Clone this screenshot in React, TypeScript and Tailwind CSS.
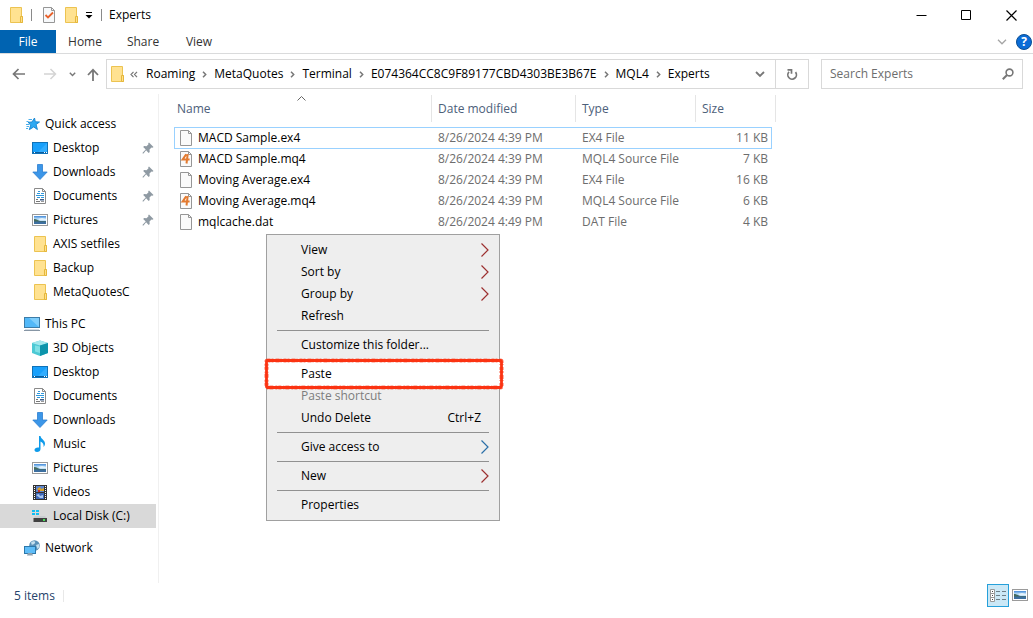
import type { ReactNode } from 'react';

type IconProps = { className?: string };

function FolderIcon({ className = '' }: IconProps) {
  return (
    <svg width="16" height="16" viewBox="0 0 16 16" className={`shrink-0 ${className}`} aria-hidden="true">
      <path d="M2.500.5h11v9h1v6h-12z" fill="#ffe08a" stroke="#ecc351" />
      <path d="M3 1h10v8.500h-1.500V15H3z" fill="#ffe291" />
      <path d="M12.500 9.500h2v6h-2z" fill="#ffe08a" stroke="#e5b73c" />
    </svg>
  );
}

function StarIcon() {
  return (
    <svg width="16" height="16" viewBox="0 0 16 16" className="shrink-0" aria-hidden="true">
      <path d="M10.500 2l.8 3.800 4.200.2-3.400 2.500 1.300 5-3.700-2.600-4.400 2.800 1.500-4.700L4 6.300l4-.3z" fill="#2fa9f2" stroke="#1583cf" strokeWidth=".9" />
      <path d="M4.500 3.500h3.500M2.500 5.500h2M2 8.500h3.500M2.500 10.500h2.500M2 12.500h2" stroke="#4aaeea" />
    </svg>
  );
}

function DesktopIcon() {
  return (
    <svg width="16" height="16" viewBox="0 0 16 16" className="shrink-0" aria-hidden="true">
      <rect x=".5" y="2.500" width="15" height="11" fill="#18a0fb" stroke="#0f72b8" />
      <path d="M15 3v9H6z" fill="#3db2ff" opacity=".7" />
      <path d="M1 12.500h14" stroke="#0b5c9c" />
      <path d="M2 12.500h1M12 12.500h1M14 12.500h1" stroke="#fff" />
    </svg>
  );
}

function DownloadIcon() {
  return (
    <svg width="16" height="16" viewBox="0 0 16 16" className="shrink-0" aria-hidden="true">
      <path d="M5.500.5h5v7.500h4.700L8 15.500.8 8h4.700z" fill="#3c96e8" stroke="#2c7fd0" strokeWidth=".8" />
    </svg>
  );
}

function DocumentIcon() {
  return (
    <svg width="16" height="16" viewBox="0 0 16 16" className="shrink-0" aria-hidden="true">
      <path d="M2.500.5h8l3 3v12h-11z" fill="#fff" stroke="#8a8a8a" />
      <path d="M10.500.5v3h3" fill="none" stroke="#8a8a8a" />
      <path d="M6 3.500h2M5 5.500h3M9 5.500h3M4 7.500h8M5 9.500h3M9 9.500h3" stroke="#2e97dc" />
      <path d="M4 11.500h2M4 13.500h4" stroke="#777" />
      <path d="M8 11h4v1.500H8z" fill="#3f5c86" />
      <path d="M9 13.500h3" stroke="#999" />
    </svg>
  );
}

function PictureIcon() {
  return (
    <svg width="16" height="16" viewBox="0 0 16 16" className="shrink-0" aria-hidden="true">
      <rect x=".5" y="2.500" width="15" height="11" fill="#fff" stroke="#9a9a9a" />
      <rect x="2" y="4" width="12" height="8" fill="#a9d3f5" />
      <path d="M2 4h12v1.500H2z" fill="#5797dd" />
      <path d="M2 7c3 0 4 2 7 2h5v1H2z" fill="#456b5b" />
      <path d="M2 9.500h12V12H2z" fill="#3d6f9f" />
      <path d="M6 7l4-1 4 1v1.500H8z" fill="#e6f3fb" />
    </svg>
  );
}

function ComputerIcon() {
  return (
    <svg width="16" height="16" viewBox="0 0 16 16" className="shrink-0" aria-hidden="true">
      <rect x=".5" y="1.500" width="15" height="10" fill="#52b8f8" stroke="#3c7ca8" />
      <path d="M15 2v9L5 2z" fill="#8bd3fd" opacity=".8" />
      <path d="M0 14.500h16" stroke="#8796a5" />
      <path d="M1 13.500h14" stroke="#d5dde4" />
    </svg>
  );
}

function CubeIcon() {
  return (
    <svg width="16" height="16" viewBox="0 0 16 16" className="shrink-0" aria-hidden="true">
      <path d="M0 3l8-2.500L16 3v10l-8 3-8-3z" fill="#4cc9d4" />
      <path d="M0 3l8-2.500L16 3 8 5.500z" fill="#a5e8ed" />
      <path d="M8 5.500L16 3v10l-8 3z" fill="#0c94ab" />
      <path d="M3 5.500l5 1v6.500l-5-1.500z" fill="#7ee0e5" />
    </svg>
  );
}

function MusicIcon() {
  return (
    <svg width="16" height="16" viewBox="0 0 16 16" className="shrink-0" aria-hidden="true">
      <path d="M7 0h1.500c.3 3 4.500 4 4.500 7.500 0 1.500-.6 2.500-1.500 3.500.5-2.500-.5-4.500-3-5.500V13c0 2-1.500 3-3.500 3-1.500 0-2.500-.8-2.500-2 0-1.700 2-3 4.500-2.500z" fill="#0f9bea" />
    </svg>
  );
}

function VideoIcon() {
  return (
    <svg width="16" height="16" viewBox="0 0 16 16" className="shrink-0" aria-hidden="true">
      <rect x="1" y="1" width="14" height="15" fill="#333" />
      <path d="M2.500 2v13M13.500 2v13" stroke="#fff" strokeDasharray="1 1" />
      <rect x="4" y="2" width="8" height="6" fill="#5c86d0" />
      <rect x="4" y="9" width="8" height="6" fill="#3f68b8" />
      <path d="M5 5l3-2 1 2 3-1v3H7z" fill="#d8a128" />
      <path d="M6 6h2v2H6z" fill="#c2362b" />
      <path d="M4 11l3-1 1 2 3-1v3H8z" fill="#a9c7f0" />
    </svg>
  );
}

function DiskIcon() {
  return (
    <svg width="16" height="16" viewBox="0 0 16 16" className="shrink-0" aria-hidden="true">
      <path d="M0 2h3v2H0zM4 2h3v2H4zM0 5h3v2H0zM4 5h3v2H4z" fill="#10bdf2" />
      <path d="M3 8h10l2 2.500H1.500z" fill="#c9cdd0" />
      <rect x="1.500" y="10" width="13.500" height="4" fill="#414141" />
      <rect x="11" y="11" width="2" height="2" fill="#49e05b" />
    </svg>
  );
}

function NetworkIcon() {
  return (
    <svg width="16" height="16" viewBox="0 0 16 16" className="shrink-0" aria-hidden="true">
      <circle cx="10.500" cy="5.500" r="5.300" fill="#5a91b8" />
      <path d="M7 2.500c2-2 5-1.500 4 .5s-3 1-3 2.500zM12 5l3-1c.7 2 .2 4-1.500 5z" fill="#c5e0ee" />
      <rect x=".5" y="6.500" width="11" height="7" fill="#5fbdf8" stroke="#2c78ab" />
      <path d="M4 13.500h4v1H4zM3 15h6" fill="#8ba0b0" stroke="#8ba0b0" />
    </svg>
  );
}

function PinIcon() {
  return (
    <svg width="12" height="12" viewBox="0 0 12 12" className="shrink-0" aria-hidden="true">
      <path d="M7 .5L11.500 5l-1 .8-1-.2-2 2 .2 2.400-1 .9-2.600-2.600L1.500 11.500H.6v-.8L3.700 7.500 1.200 5l.9-.9 2.400.2 2-2-.3-1z" fill="#8f9aa3" />
    </svg>
  );
}

function FileIcon({ mq = false }: { mq?: boolean }) {
  return (
    <svg width="16" height="16" viewBox="0 0 16 16" className="shrink-0" aria-hidden="true">
      <path d="M2.500.5h8l3 3v12h-11z" fill="#fafafa" stroke="#969696" />
      <path d="M10.500.5v3h3" fill="none" stroke="#969696" />
      {mq && <path d="M8.200 3.200L4.600 8.600h7M9.700 3.200L8.500 12.500" fill="none" stroke="#e27a30" strokeWidth="2" />}
    </svg>
  );
}

function Chevron() {
  return (
    <svg width="5" height="7" viewBox="0 0 5 7" className="mt-px shrink-0" aria-hidden="true">
      <path d="M1 .8l2.700 2.700L1 6.200" fill="none" stroke="#777" strokeWidth="1.500" />
    </svg>
  );
}

type NavItem = { label: string; icon: ReactNode; root?: boolean; pinned?: boolean; active?: boolean };

const navGroups: NavItem[][] = [
  [
    { label: 'Quick access', icon: <StarIcon />, root: true },
    { label: 'Desktop', icon: <DesktopIcon />, pinned: true },
    { label: 'Downloads', icon: <DownloadIcon />, pinned: true },
    { label: 'Documents', icon: <DocumentIcon />, pinned: true },
    { label: 'Pictures', icon: <PictureIcon />, pinned: true },
    { label: 'AXIS setfiles', icon: <FolderIcon /> },
    { label: 'Backup', icon: <FolderIcon /> },
    { label: 'MetaQuotesC', icon: <FolderIcon /> },
  ],
  [
    { label: 'This PC', icon: <ComputerIcon />, root: true },
    { label: '3D Objects', icon: <CubeIcon /> },
    { label: 'Desktop', icon: <DesktopIcon /> },
    { label: 'Documents', icon: <DocumentIcon /> },
    { label: 'Downloads', icon: <DownloadIcon /> },
    { label: 'Music', icon: <MusicIcon /> },
    { label: 'Pictures', icon: <PictureIcon /> },
    { label: 'Videos', icon: <VideoIcon /> },
    { label: 'Local Disk (C:)', icon: <DiskIcon />, active: true },
  ],
  [{ label: 'Network', icon: <NetworkIcon />, root: true }],
];

const files = [
  { name: 'MACD Sample.ex4', date: '8/26/2024 4:39 PM', type: 'EX4 File', size: '11 KB', focused: true },
  { name: 'MACD Sample.mq4', date: '8/26/2024 4:39 PM', type: 'MQL4 Source File', size: '7 KB' },
  { name: 'Moving Average.ex4', date: '8/26/2024 4:39 PM', type: 'EX4 File', size: '16 KB' },
  { name: 'Moving Average.mq4', date: '8/26/2024 4:39 PM', type: 'MQL4 Source File', size: '6 KB' },
  { name: 'mqlcache.dat', date: '8/26/2024 4:49 PM', type: 'DAT File', size: '4 KB' },
];

const crumbs = ['Roaming', 'MetaQuotes', 'Terminal', 'E074364CC8C9F89177CBD4303BE3B67E', 'MQL4', 'Experts'];

function TitleBar() {
  return (
    <header className="flex h-[30px] items-center pl-2">
      <FolderIcon />
      <span className="ml-[7px] h-3 w-px bg-[#8a8a8a]" />
      <button aria-label="Properties" className="ml-[9px]">
        <svg width="16" height="16" viewBox="0 0 16 16" aria-hidden="true">
          <path d="M2.500.5h8l3 3v12h-11z" fill="#f7f9fb" stroke="#969696" />
          <path d="M10.500.5v3h3" fill="none" stroke="#969696" />
          <path d="M4.500 8l2.500 2.500 5-5" fill="none" stroke="#e8622c" strokeWidth="1.800" />
        </svg>
      </button>
      <button aria-label="New folder" className="ml-[6px]"><FolderIcon /></button>
      <button aria-label="Customize Quick Access Toolbar" className="ml-[6px]">
        <svg width="8" height="8" viewBox="0 0 8 8" aria-hidden="true">
          <path d="M1 1.500h6" stroke="#000" />
          <path d="M.5 4h7L4 7.500z" />
        </svg>
      </button>
      <span className="ml-2 h-3 w-px bg-[#8a8a8a]" />
      <h1 className="ml-[7px]">Experts</h1>
      <div className="ml-auto flex h-full">
        <button aria-label="Minimize" className="flex w-[45px] items-center justify-center">
          <svg width="11" height="11" viewBox="0 0 11 11"><path d="M.5 5.500h10" stroke="#000" /></svg>
        </button>
        <button aria-label="Maximize" className="flex w-[45px] items-center justify-center">
          <svg width="11" height="11" viewBox="0 0 11 11"><path d="M.5.5h9v9h-9z" fill="none" stroke="#000" /></svg>
        </button>
        <button aria-label="Close" className="flex w-11 items-center justify-center">
          <svg width="11" height="11" viewBox="0 0 11 11"><path d="M.5.5l10 10M10.500.5l-10 10" stroke="#000" strokeWidth="1.200" /></svg>
        </button>
      </div>
    </header>
  );
}

function Ribbon() {
  return (
    <div className="flex h-6 border-b border-[#dadbdc] text-[#333]">
      <button className="w-14 bg-[#0063b1] text-white">File</button>
      <button className="w-[58px]">Home</button>
      <button className="w-[58px]">Share</button>
      <button className="w-[54px]">View</button>
      <div className="ml-auto flex items-center gap-[9px] pr-px">
        <button aria-label="Expand the Ribbon">
          <svg width="10" height="6" viewBox="0 0 10 6"><path d="M1 .8l4 4 4-4" fill="none" stroke="#a5a5a5" strokeWidth="1.300" /></svg>
        </button>
        <button aria-label="Help" className="size-4 rounded-full border border-[#0b4f94] bg-[#0b6cd6] text-center text-[12px] leading-[14px] font-bold text-white">?</button>
      </div>
    </div>
  );
}

function AddressBar() {
  return (
    <div className="flex h-10 items-center pr-[10px] text-black">
      <div className="flex w-[106px] shrink-0 items-center pl-3">
        <button aria-label="Back">
          <svg width="14" height="12" viewBox="0 0 14 12"><path d="M13 6H2M6.500 1l-5 5 5 5" fill="none" stroke="#777" strokeWidth="1.700" /></svg>
        </button>
        <button aria-label="Forward" className="ml-[17px]">
          <svg width="14" height="12" viewBox="0 0 14 12"><path d="M1 6h11M7.500 1l5 5-5 5" fill="none" stroke="#d4d4d4" strokeWidth="1.500" /></svg>
        </button>
        <button aria-label="Recent locations" className="ml-[12px]">
          <svg width="7" height="5" viewBox="0 0 7 5"><path d="M.8.8l2.700 2.700L6.200.8" fill="none" stroke="#777" strokeWidth="1.400" /></svg>
        </button>
        <button aria-label="Up" className="ml-[11px]">
          <svg width="12" height="13" viewBox="0 0 12 13"><path d="M6 13V2M1 7l5-5.300L11 7" fill="none" stroke="#777" strokeWidth="1.800" /></svg>
        </button>
      </div>
      <div className="flex h-[30px] min-w-0 flex-1 border border-[#d9d9d9]">
        <nav aria-label="Address" className="flex min-w-0 flex-1 items-center overflow-hidden pl-[2px] whitespace-nowrap">
          <FolderIcon />
          <svg width="8" height="7" viewBox="0 0 8 7" className="ml-[5px] shrink-0" aria-hidden="true">
            <path d="M3.500.8L1 3.500l2.500 2.700M7 .8L4.500 3.500 7 6.200" fill="none" stroke="#777" strokeWidth="1.200" />
          </svg>
          <ol className="ml-2 flex items-center gap-[7px]">
            {crumbs.map((c, i) => (
              <li key={c} className="flex items-center gap-[7px]">
                {i > 0 && <Chevron />}
                <a href="#">{c}</a>
              </li>
            ))}
          </ol>
        </nav>
        <button aria-label="Previous locations" className="flex w-[30px] shrink-0 items-center justify-center">
          <svg width="10" height="7" viewBox="0 0 10 7"><path d="M1 1l4 4 4-4" fill="none" stroke="#777" strokeWidth="1.800" /></svg>
        </button>
        <button aria-label="Refresh" className="flex w-[33px] shrink-0 items-center justify-center border-l border-[#d9d9d9]">
          <svg width="12" height="13" viewBox="0 0 12 13">
            <path d="M3 3.800a4.300 4.300 0 1 0 6.500.3M1.500 1.800h4v4" fill="none" stroke="#777" strokeWidth="1.700" />
          </svg>
        </button>
      </div>
      <label className="ml-3 flex h-[30px] w-[202px] items-center border border-[#d9d9d9] pr-2 pl-2">
        <input type="text" aria-label="Search Experts" placeholder="Search Experts" className="min-w-0 flex-1 outline-none placeholder:text-[#6d6d6d]" />
        <svg width="12" height="12" viewBox="0 0 12 12" aria-hidden="true">
          <circle cx="7.500" cy="4.500" r="3.400" fill="none" stroke="#777" strokeWidth="1.600" />
          <path d="M5 7L.8 11.200" stroke="#777" strokeWidth="2" />
        </svg>
      </label>
    </div>
  );
}

function Sidebar() {
  return (
    <nav aria-label="Folders" className="flex w-[159px] shrink-0 flex-col gap-2 border-r border-[#f0f0f0] pt-[18px] pr-[2px]">
      {navGroups.map((group, i) => (
        <ul key={i}>
          {group.map((item) => (
            <li key={item.label}>
              <a
                href="#"
                className={`flex h-6 items-center gap-[5px] pr-[2px] ${item.root ? 'pl-6' : 'pl-8'} ${item.active ? 'bg-[#d9d9d9]' : ''}`}
              >
                {item.icon}
                <span className="flex-1 whitespace-nowrap">{item.label}</span>
                {item.pinned && <PinIcon />}
              </a>
            </li>
          ))}
        </ul>
      ))}
    </nav>
  );
}

function FileTable() {
  return (
    <table className="w-[602px] table-fixed border-collapse text-left text-[#6d6d6d]">
      <colgroup>
        <col className="w-[258px]" />
        <col className="w-[144px]" />
        <col className="w-[120px]" />
        <col className="w-[80px]" />
      </colgroup>
      <thead>
        <tr className="text-[#4c607a]">
          {['Name', 'Date modified', 'Type', 'Size'].map((h) => (
            <th key={h} scope="col" className="p-0 pt-px pb-[5px] font-normal">
              <button className={`relative flex h-[27px] w-full items-center border-r border-[#e5e5e5] text-left ${h === 'Name' ? 'pl-[3px]' : 'pl-[6px]'}`}>
                {h}
                {h === 'Name' && (
                  <svg width="9" height="5" viewBox="0 0 9 5" className="absolute top-px left-[123px]" aria-hidden="true">
                    <path d="M.5 4.500l4-4 4 4" fill="none" stroke="#666" />
                  </svg>
                )}
              </button>
            </th>
          ))}
        </tr>
      </thead>
      <tbody>
        {files.map((f) => {
          const cell = f.focused ? '-mb-px flex h-[22px] items-center border-y border-[#99d1ff]' : 'flex h-[21px] items-center border-transparent';
          return (
            <tr key={f.name}>
              <td className="p-0">
                <div className={`${cell} gap-1 border-l pl-[3px] text-black`}>
                  <FileIcon mq={f.name.endsWith('.mq4')} />
                  {f.name}
                </div>
              </td>
              <td className="p-0"><div className={`${cell} pl-[6px]`}>{f.date}</div></td>
              <td className="p-0"><div className={`${cell} pl-[6px]`}>{f.type}</div></td>
              <td className="p-0"><div className={`${cell} mr-1 justify-end border-r pr-[3px]`}>{f.size}</div></td>
            </tr>
          );
        })}
      </tbody>
    </table>
  );
}

function MenuItem({ label, arrow, shortcut, disabled }: { label: string; arrow?: string; shortcut?: string; disabled?: boolean }) {
  return (
    <button role="menuitem" disabled={disabled} className={`flex h-[22px] w-full items-center pr-[10px] pl-[34px] ${disabled ? 'text-[#7d7d7d]' : ''}`}>
      {label}
      {shortcut && <span className="mr-2 ml-auto">{shortcut}</span>}
      {arrow && (
        <svg width="8" height="14" viewBox="0 0 8 14" className="ml-auto" aria-hidden="true">
          <path d="M.5.5L7 7 .5 13.500" fill="none" stroke={arrow} strokeWidth="1.200" />
        </svg>
      )}
    </button>
  );
}

function MenuLine() {
  return <div role="separator" className="mx-[10px] my-[3px] h-px bg-[#919191]" />;
}

function ContextMenu() {
  return (
    <div role="menu" className="absolute top-[140px] left-[107px] w-[234px] border border-[#a0a0a0] bg-[#eee] py-1 text-black">
      <MenuItem label="View" arrow="#9c3030" />
      <MenuItem label="Sort by" arrow="#9c3030" />
      <MenuItem label="Group by" arrow="#9c3030" />
      <MenuItem label="Refresh" />
      <MenuLine />
      <MenuItem label="Customize this folder..." />
      <MenuLine />
      <div className="relative">
        <svg width="240" height="34" viewBox="0 0 240 34" className="absolute -top-[6px] -left-[3px] overflow-visible" aria-hidden="true">
          <rect x="2.500" y="3.500" width="235" height="27" fill="#fff" />
          <rect x="2.500" y="3.500" width="235" height="27" rx="1" fill="none" stroke="#fb3413" strokeWidth="2.800" />
          <rect x="2.500" y="3.500" width="235" height="27" rx="1" fill="none" stroke="#fb3413" strokeOpacity=".6" strokeWidth="4.200" strokeDasharray="3 1 2 2 4 1 1 2" />
        </svg>
        <div className="relative"><MenuItem label="Paste" /></div>
      </div>
      <MenuItem label="Paste shortcut" disabled />
      <MenuItem label="Undo Delete" shortcut="Ctrl+Z" />
      <MenuLine />
      <MenuItem label="Give access to" arrow="#2a6fa8" />
      <MenuLine />
      <MenuItem label="New" arrow="#9c3030" />
      <MenuLine />
      <MenuItem label="Properties" />
    </div>
  );
}

function StatusBar() {
  return (
    <footer className="flex h-[35px] items-start pt-px pr-[5px] pl-[14px] text-[#26436b]">
      <span className="flex h-6 items-center">5 items</span>
      <span className="mt-[6px] ml-2 h-3 w-px bg-[#e8e8e8]" />
      <div className="ml-auto flex items-center gap-[3px]">
        <button aria-label="Details view" className="flex h-[23px] w-[22px] items-center justify-center border border-[#26a0da] bg-[#cbe8f6]">
          <svg width="16" height="15" viewBox="0 0 16 15">
            <path d="M.5 1.500h4v12h-4zM.5 5.500h4M.5 9.500h4" fill="#fff" stroke="#999" />
            <path d="M2 3.500h1M2 7.500h1M2 11.500h1" stroke="#444" />
            <path d="M6 3.500h4M12 3.500h4M6 7.500h4M12 7.500h4M6 11.500h4M12 11.500h4" stroke="#6d7f88" />
          </svg>
        </button>
        <button aria-label="Large icons view" className="-mt-[2px]"><PictureIcon /></button>
      </div>
    </footer>
  );
}

export default function App() {
  return (
    <div className="flex min-h-screen flex-col bg-white font-['Open_Sans','Noto_Sans',sans-serif] text-[12px] leading-4 text-black">
      <TitleBar />
      <Ribbon />
      <AddressBar />
      <div className="flex flex-1">
        <Sidebar />
        <main className="relative min-w-0 flex-1 pl-[15px]">
          <FileTable />
          <ContextMenu />
        </main>
      </div>
      <StatusBar />
    </div>
  );
}
